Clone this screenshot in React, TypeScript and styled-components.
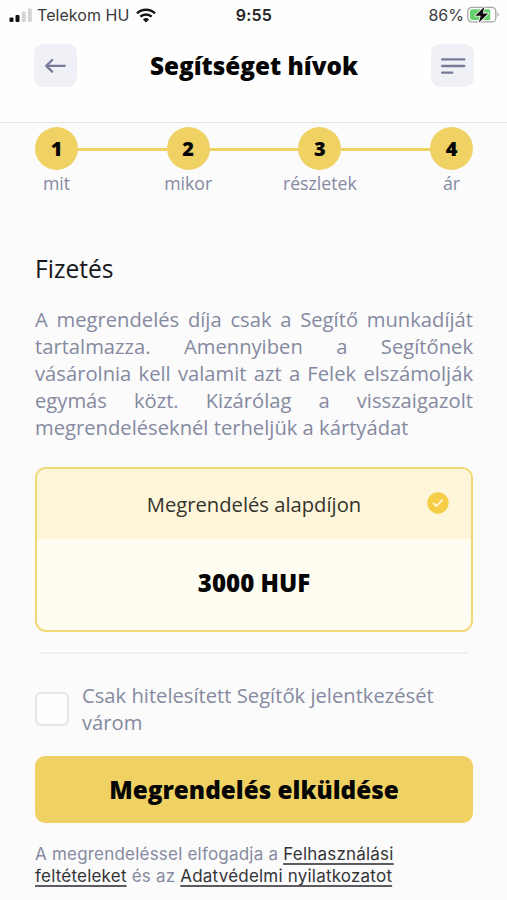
import React from "react";
import styled, { createGlobalStyle } from "styled-components";

const Global = createGlobalStyle`
  *, *::before, *::after { box-sizing: border-box; }
  html, body { margin: 0; padding: 0; background: #fbfbfc; }
  body { font-family: "Open Sans", "Noto Sans", sans-serif; color: #050505; }
  button { font: inherit; color: inherit; border: 0; padding: 0; }
`;

const muted = "#858aa0";
const yellow = "#efd263";

const Screen = styled.div`
  width: 507px;
  height: 900px;
  overflow: hidden;
  background: #fbfbfc;
`;

const Top = styled.header`
  height: 123px;
  background: #fefefe;
  border-bottom: 1px solid #e2e3e8;
`;

const StatusBar = styled.div`
  display: grid;
  grid-template-columns: 1fr auto 1fr;
  align-items: center;
  height: 30px;
  padding: 0 8px 0 9px;
  font-family: Inter, "Liberation Sans", sans-serif;
  font-size: 16px;
  line-height: 30px;
  color: #3a3a3c;
`;

const StatusGroup = styled.div<{ $end?: boolean }>`
  display: flex;
  align-items: center;
  justify-content: ${(p) => (p.$end ? "flex-end" : "flex-start")};
  svg { flex: none; }
`;

const Carrier = styled.span`
  margin: 0 7px 0 5px;
  letter-spacing: 0.05px;
`;

const Percent = styled.span`
  margin-right: 3px;
`;

const Clock = styled.span`
  font-weight: 600;
  color: #242426;
  letter-spacing: 0.2px;
`;

const NavBar = styled.div`
  display: flex;
  align-items: center;
  justify-content: space-between;
  height: 43px;
  margin: 14px 33px 0 34px;
`;

const IconButton = styled.button`
  display: grid;
  place-items: center;
  width: 43px;
  height: 43px;
  border-radius: 9px;
  background: #eff1f6;
`;

const Title = styled.h1`
  margin: 0;
  font-size: 24.3px;
  line-height: 43px;
  font-weight: 800;
`;

const Content = styled.main`
  padding: 4px 34px 0 35px;
`;

const Steps = styled.ol`
  display: flex;
  justify-content: space-between;
  margin: 0;
  padding: 0;
  list-style: none;
`;

const Step = styled.li`
  display: flex;
  flex-direction: column;
  align-items: center;
  width: 43px;
`;

const StepLink = styled.li`
  flex: 1;
  height: 3px;
  margin-top: 21px;
  background: ${yellow};
`;

const StepDot = styled.span`
  display: grid;
  place-items: center;
  width: 43px;
  height: 43px;
  border-radius: 50%;
  background: ${yellow};
  font-size: 20px;
  line-height: 42px;
  padding-top: 1px;
  font-weight: 800;
`;

const StepLabel = styled.span`
  margin-top: 1px;
  font-size: 17.7px;
  line-height: 24px;
  white-space: nowrap;
  color: ${muted};
`;

const SectionTitle = styled.h2`
  margin: 56px 0 0;
  font-size: 24.6px;
  line-height: 36px;
  font-weight: 400;
  color: #17171a;
`;

const Description = styled.p`
  margin: 19px 0 0;
  font-size: 20.2px;
  line-height: 27px;
  text-align: justify;
  color: ${muted};
`;

const PriceCard = styled.section`
  height: 165px;
  margin-top: 26px;
  border: 2px solid #f2d976;
  border-radius: 11px;
  overflow: hidden;
  background: #fffdf1;
  text-align: center;
`;

const PriceHead = styled.div`
  display: grid;
  grid-template-columns: 48px 1fr 48px;
  align-items: center;
  height: 70px;
  background: #fef6db;
  font-size: 20.2px;
  color: #34332c;
  svg { margin: 0 0 3px 4px; }
`;

const PriceLabel = styled.span`
  grid-column: 2;
`;

const Price = styled.div`
  font-size: 24.1px;
  line-height: 88px;
  font-weight: 800;
`;

const Divider = styled.hr`
  height: 2px;
  margin: 20px 5px 0;
  border: 0;
  background: #eef0f4;
`;

const CheckRow = styled.label`
  display: flex;
  align-items: center;
  gap: 13px;
  margin-top: 28px;
  font-size: 20.2px;
  line-height: 27px;
  color: ${muted};
`;

const CheckBox = styled.span`
  flex: none;
  width: 34px;
  height: 34px;
  border: 2px solid #e3e5eb;
  border-radius: 6px;
  background: #fefefe;
`;

const Submit = styled.button`
  display: block;
  width: 100%;
  height: 67px;
  margin-top: 20px;
  border-radius: 10px;
  background: ${yellow};
  font-size: 24.3px;
  line-height: 67px;
  font-weight: 800;
`;

const Legal = styled.p`
  margin: 21px 0 0;
  font-family: Inter, "Liberation Sans", sans-serif;
  font-size: 17px;
  line-height: 21.7px;
  letter-spacing: 0.21px;
  color: ${muted};
  white-space: nowrap;
`;

const LegalLink = styled.a`
  color: #343437;
  text-decoration: underline #5c5c60;
  text-decoration-thickness: 1.5px;
  text-underline-offset: 3px;
  text-decoration-skip-ink: none;
`;

const Signal = () => (
  <svg width="23" height="15" viewBox="0 0 23 15">
    <rect x="0.5" y="9.5" width="4" height="4.5" rx="1" fill="#111" />
    <rect x="6.5" y="7" width="4" height="7" rx="1" fill="#111" />
    <rect x="12.8" y="3.5" width="4" height="10.5" rx="1" fill="#d4d4d6" />
    <rect x="18.8" y="0.5" width="4" height="13.5" rx="1" fill="#d4d4d6" />
  </svg>
);

const Wifi = () => (
  <svg width="20" height="15" viewBox="0 0 20 15" fill="none" stroke="#161618" strokeWidth="2.5">
    <path d="M1 5.4a13 13 0 0 1 18 0" />
    <path d="M4.3 8.7a8.2 8.2 0 0 1 11.4 0" />
    <path d="M10 14.5 6.9 11.4a4.5 4.5 0 0 1 6.2 0z" fill="#161618" stroke="none" />
  </svg>
);

const Battery = () => (
  <svg width="32" height="18" viewBox="0 0 32 18">
    <rect x="0.8" y="1.3" width="28" height="14.6" rx="4" fill="#fff" stroke="#a5a7a5" strokeWidth="1.3" />
    <path d="M5.5 3.3h17.7v10.6H5.5a2.5 2.5 0 0 1-2.5-2.5V5.8a2.5 2.5 0 0 1 2.5-2.5z" fill="#66d16c" />
    <path d="M30.3 6.5v4c1.8-.6 1.8-3.4 0-4z" fill="#a5a7a5" />
    <path d="M17.4.8 8.2 9.7h5.5L11.9 16.6l9.3-9.2h-5.5z" fill="#0c0c0c" stroke="#fff" strokeWidth="1.6" paintOrder="stroke" strokeLinejoin="round" />
  </svg>
);

const BackArrow = () => (
  <svg width="24" height="18" viewBox="0 0 24 18" fill="none" stroke="#777b99" strokeWidth="2.3" strokeLinecap="round" strokeLinejoin="round">
    <path d="M20.8 8.8H2.2M8.2 3 2.2 8.8l6 5.8" />
  </svg>
);

const MenuLines = () => (
  <svg width="26" height="18" viewBox="0 0 26 18" stroke="#777b99" strokeWidth="2.4" strokeLinecap="round">
    <path d="M2.2 2.4h22M2.2 9h22M2.2 15.6h10" />
  </svg>
);

const SelectedMark = () => (
  <svg width="22" height="22" viewBox="0 0 22 22">
    <circle cx="11" cy="11" r="10.7" fill="#f5cd46" />
    <path d="m6.6 11.3 2.8 2.8 6-6.2" fill="none" stroke="#fff8df" strokeWidth="1.7" strokeLinecap="round" strokeLinejoin="round" />
  </svg>
);

const steps = ["mit", "mikor", "részletek", "ár"];

export default function App() {
  return (
    <Screen>
      <Global />
      <Top>
        <StatusBar>
          <StatusGroup>
            <Signal />
            <Carrier>Telekom HU</Carrier>
            <Wifi />
          </StatusGroup>
          <Clock>9:55</Clock>
          <StatusGroup $end>
            <Percent>86%</Percent>
            <Battery />
          </StatusGroup>
        </StatusBar>
        <NavBar>
          <IconButton aria-label="Vissza"><BackArrow /></IconButton>
          <Title>Segítséget hívok</Title>
          <IconButton aria-label="Menü"><MenuLines /></IconButton>
        </NavBar>
      </Top>
      <Content>
        <Steps>
          {steps.map((label, i) => (
            <React.Fragment key={label}>
              {i > 0 && <StepLink aria-hidden />}
              <Step>
                <StepDot>{i + 1}</StepDot>
                <StepLabel>{label}</StepLabel>
              </Step>
            </React.Fragment>
          ))}
        </Steps>
        <SectionTitle>Fizetés</SectionTitle>
        <Description>
          A megrendelés díja csak a Segítő munkadíját tartalmazza. Amennyiben a
          Segítőnek vásárolnia kell valamit azt a Felek elszámolják egymás közt.
          Kizárólag a visszaigazolt megrendeléseknél terheljük a kártyádat
        </Description>
        <PriceCard>
          <PriceHead>
            <PriceLabel>Megrendelés alapdíjon</PriceLabel>
            <SelectedMark />
          </PriceHead>
          <Price>3000 HUF</Price>
        </PriceCard>
        <Divider />
        <CheckRow>
          <CheckBox />
          <span>Csak hitelesített Segítők jelentkezését várom</span>
        </CheckRow>
        <Submit>Megrendelés elküldése</Submit>
        <Legal>
          A megrendeléssel elfogadja a <LegalLink>Felhasználási</LegalLink>
          <br />
          <LegalLink>feltételeket</LegalLink> és az <LegalLink>Adatvédelmi nyilatkozatot</LegalLink>
        </Legal>
      </Content>
    </Screen>
  );
}
